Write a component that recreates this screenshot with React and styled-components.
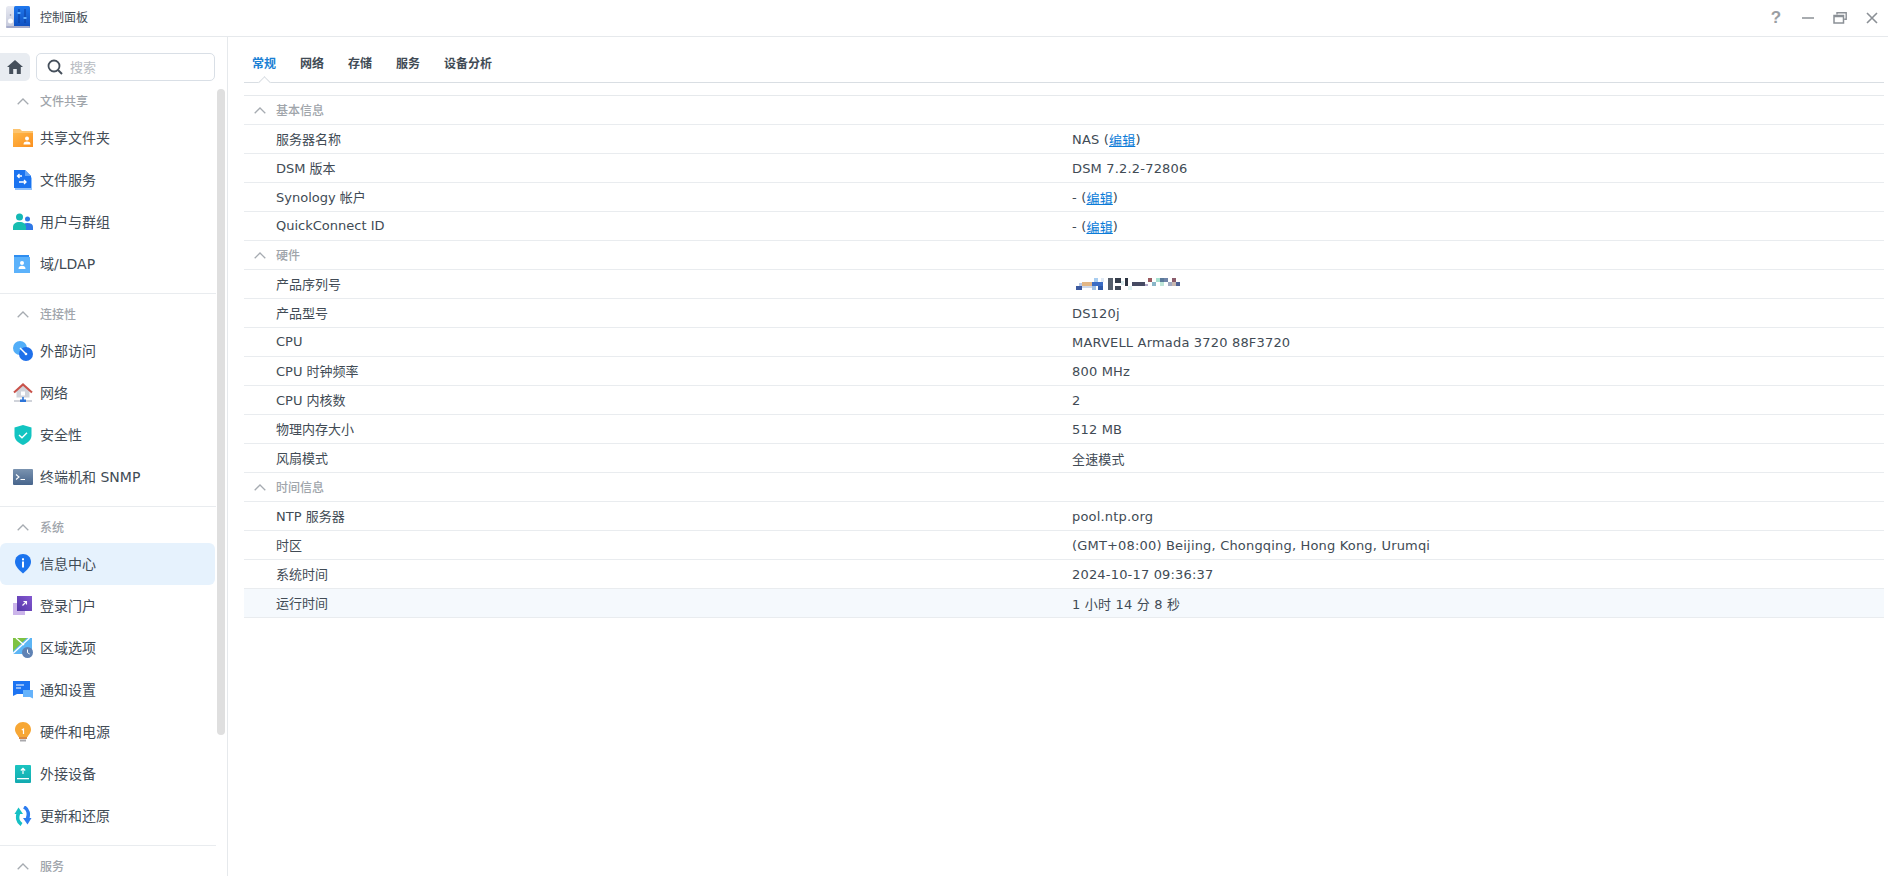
import styled, { createGlobalStyle } from 'styled-components'

const FONT = `"DejaVu Sans", "Noto Sans CJK SC", sans-serif`

const GlobalStyle = createGlobalStyle`
  html, body, #root {
    margin: 0;
    height: 100%;
  }

  body {
    background: #fff;
    overflow: hidden;
    font-family: ${FONT};
    color: #414b55;
  }
`

const FolderIcon = () => (
  <svg width="20" height="20" viewBox="0 0 20 20">
    <defs>
      <linearGradient id="fold" x1="0" y1="0" x2="1" y2="1">
        <stop offset="0" stopColor="#ffb84a" />
        <stop offset="1" stopColor="#fb8f1d" />
      </linearGradient>
    </defs>
    <path d="M0 1h7l2 2h11v16H0z" fill="#fdc46f" />
    <path d="M0 5h20v14H0z" fill="url(#fold)" />
    <circle cx="14" cy="10.5" r="2" fill="#fff" />
    <path d="M10.5 16.5c0-2.400 1.500-3 3.500-3s3.500.6 3.500 3z" fill="#fff" />
  </svg>
)

const FileServiceIcon = () => (
  <svg width="20" height="20" viewBox="0 0 20 20">
    <path d="M2 2h11l6 6v12H2z" fill="#8fc0fb" />
    <path d="M1 0h11l6 6v12H1z" fill="#1a73f0" />
    <path d="M12 0l6 6h-6z" fill="#63a4f7" />
    <path d="M9 6H5M6.500 4L4.500 6l2 2M6 12h6.500M11 10l2 2-2 2" fill="none" stroke="#fff" strokeWidth="1.300" />
  </svg>
)

const UsersIcon = () => (
  <svg width="20" height="20" viewBox="0 0 20 20">
    <circle cx="6.500" cy="5" r="3.500" fill="#14b8b4" />
    <circle cx="14.500" cy="7" r="2.500" fill="#2f78e6" />
    <path d="M9 18h11v-3c0-2.500-2-4-5.500-4S9 12.500 9 15z" fill="#2f78e6" />
    <path d="M0 18v-3c0-3 2.500-5 6.500-5s6.500 2 6.500 5v3z" fill="#17bdb0" />
  </svg>
)

const DomainIcon = () => (
  <svg width="20" height="20" viewBox="0 0 20 20">
    <path d="M1 1h15v18H1z" fill="#2e8df0" />
    <path d="M1 3h16v16H1z" fill="#5cb2fb" />
    <circle cx="9" cy="9" r="2" fill="#fff" />
    <path d="M5.500 15c0-2.500 1.500-3.200 3.500-3.200s3.500.7 3.500 3.200z" fill="#fff" />
  </svg>
)

const ExternalIcon = () => (
  <svg width="20" height="20" viewBox="0 0 20 20">
    <circle cx="7" cy="7" r="7" fill="#52aef8" />
    <circle cx="13" cy="13" r="7" fill="#1f70ea" />
    <path d="M7 7l6 6" stroke="#fff" strokeWidth="1.400" />
    <circle cx="13" cy="13" r="1.300" fill="#fff" />
  </svg>
)

const NetworkIcon = () => (
  <svg width="20" height="20" viewBox="0 0 20 20">
    <path d="M3.500 8L10 2.500 16.500 8v6.500h-13z" fill="#d0d3da" />
    <path d="M1 9.500L10 1.500l9 8" fill="none" stroke="#c9524a" strokeWidth="2.100" />
    <rect x="8" y="8.500" width="4" height="4" fill="#fff" />
    <rect x="1" y="17" width="18" height="2" fill="#d0d3da" />
    <rect x="9.200" y="14" width="1.600" height="3" fill="#2c74d8" />
    <rect x="7" y="16.500" width="6" height="2.500" fill="#2c74d8" />
  </svg>
)

const ShieldIcon = () => (
  <svg width="20" height="20" viewBox="0 0 20 20">
    <path d="M10 0l8.500 2.500v8c0 4.500-4 7.500-8.500 9.500-4.500-2-8.500-5-8.500-9.500v-8z" fill="#12c4c1" />
    <path d="M6 10l3 2.800 5-5" fill="none" stroke="#fff" strokeWidth="1.400" />
  </svg>
)

const TerminalIcon = () => (
  <svg width="20" height="20" viewBox="0 0 20 20">
    <defs>
      <linearGradient id="term" x1="0" y1="0" x2="0" y2="1">
        <stop offset="0" stopColor="#7a93b0" />
        <stop offset="1" stopColor="#47658c" />
      </linearGradient>
    </defs>
    <rect x="0" y="2" width="20" height="16" rx="1" fill="url(#term)" />
    <path d="M3 7.500l3 2.500-3 2.500M7.500 12.500H12" fill="none" stroke="#fff" strokeWidth="1.100" />
  </svg>
)

const InfoIcon = () => (
  <svg width="20" height="20" viewBox="0 0 20 20">
    <path d="M10 0c4.500 0 8 3.300 8 7.800 0 4.700-4.500 8.700-8 11.700-3.500-3-8-7-8-11.700C2 3.300 5.500 0 10 0z" fill="#1c74ee" />
    <rect x="9" y="7.500" width="2" height="6" fill="#fff" />
    <rect x="9" y="4.300" width="2" height="2" fill="#fff" />
  </svg>
)

const LoginIcon = () => (
  <svg width="20" height="20" viewBox="0 0 20 20">
    <defs>
      <linearGradient id="portal" x1="1" y1="0" x2="0" y2="1">
        <stop offset="0" stopColor="#8458d0" />
        <stop offset="1" stopColor="#5436a8" />
      </linearGradient>
    </defs>
    <rect x="0" y="7" width="12" height="12" fill="#cbb4ea" />
    <rect x="4" y="0" width="15" height="15" fill="url(#portal)" />
    <path d="M9.500 9.500l4-4M10.500 5.500h3v3" fill="none" stroke="#fff" strokeWidth="1.100" />
  </svg>
)

const RegionIcon = () => (
  <svg width="20" height="20" viewBox="0 0 20 20">
    <rect x="0" y="0" width="19" height="16" fill="#5cb5f5" />
    <path d="M0 0h14L0 13z" fill="#7ec242" />
    <path d="M0 15.500L16.500 0" stroke="#fff" strokeWidth="1.300" />
    <path d="M3 0l8 7" stroke="#fff" strokeWidth="1.300" />
    <circle cx="14.500" cy="14.500" r="5.500" fill="#5f82b4" />
    <path d="M14.500 11.500v3.200l2.200 1.300" fill="none" stroke="#fff" strokeWidth="1" />
  </svg>
)

const NoticeIcon = () => (
  <svg width="20" height="20" viewBox="0 0 20 20">
    <path d="M0 1h17v13H4l-4 2z" fill="#1d74f2" />
    <path d="M3 5h8M3 8h5" stroke="#fff" strokeWidth="1.200" />
    <path d="M10 10h10v8.500l-3-1.500h-7z" fill="#66b3fb" />
  </svg>
)

const BulbIcon = () => (
  <svg width="20" height="20" viewBox="0 0 20 20">
    <path d="M10 0c4.500 0 8 3.300 8 7.500 0 3.500-2.500 5.200-3.500 7.500h-9C4.500 12.700 2 11 2 7.500 2 3.300 5.500 0 10 0z" fill="#f7a735" />
    <rect x="6" y="15" width="8" height="2" fill="#d98a44" />
    <rect x="7" y="17.500" width="6" height="2" fill="#a9a9ad" />
    <path d="M8.800 8l1.700-1v5" fill="none" stroke="#fff" strokeWidth="1.200" />
  </svg>
)

const DeviceIcon = () => (
  <svg width="20" height="20" viewBox="0 0 20 20">
    <defs>
      <linearGradient id="dev" x1="0" y1="0" x2="0" y2="1">
        <stop offset="0" stopColor="#1bc4c0" />
        <stop offset="1" stopColor="#12aab0" />
      </linearGradient>
    </defs>
    <rect x="2" y="1" width="16" height="18" rx="1" fill="url(#dev)" />
    <path d="M10 10V4.500M7.800 6.500L10 4.300l2.200 2.200" fill="none" stroke="#fff" strokeWidth="1.200" />
    <rect x="4" y="14" width="12" height="1.300" fill="#fff" />
  </svg>
)

const UpdateIcon = () => (
  <svg width="20" height="20" viewBox="0 0 20 20">
    <path d="M8.500 18.500C4.500 16 4 11 5.500 7" fill="none" stroke="#16c0c4" strokeWidth="3.600" />
    <path d="M5.500 1.500L10 8H1.500z" fill="#16c0c4" />
    <path d="M11 1c4.500 2.500 5 7.500 3.500 11.500" fill="none" stroke="#2c7cf0" strokeWidth="3.600" />
    <path d="M14.500 18.500L10 12h8.500z" fill="#2c7cf0" />
  </svg>
)

const AppIcon = () => (
  <svg width="24" height="24" viewBox="0 0 24 24">
    <defs>
      <linearGradient id="app-right" x1="0" y1="0" x2="0" y2="1">
        <stop offset="0" stopColor="#1f78ee" />
        <stop offset="1" stopColor="#0e4dbd" />
      </linearGradient>
      <linearGradient id="app-left" x1="0" y1="0" x2="0" y2="1">
        <stop offset="0" stopColor="#e8eaf2" />
        <stop offset="1" stopColor="#c3c7da" />
      </linearGradient>
    </defs>
    <rect x="0" y="0" width="12" height="22" rx="2.500" fill="url(#app-left)" />
    <rect x="8" y="0" width="16" height="22" rx="1.500" fill="url(#app-right)" />
    <rect x="0" y="20" width="24" height="2" rx="1" fill="#a6acca" />
    <circle cx="4.500" cy="15" r="2.500" fill="#fff" />
    <circle cx="4.500" cy="9" r="0.800" fill="#8d92a8" />
    <path d="M13 3v14M19 3v14" stroke="#0b3d9c" strokeWidth="1" />
    <rect x="11.500" y="6" width="3" height="2" fill="#5fb0ff" />
    <rect x="17.500" y="11" width="3" height="2" fill="#5fb0ff" />
  </svg>
)

const HomeIcon = () => (
  <svg width="16" height="14" viewBox="0 0 16 14">
    <path d="M8 0L0 7h2.200v7h4V9h3.600v5h4V7H16z" fill="#454f5b" />
  </svg>
)

const SearchIcon = () => (
  <svg width="16" height="16" viewBox="0 0 16 16">
    <circle cx="7" cy="7" r="5.500" fill="none" stroke="#454f5b" strokeWidth="1.800" />
    <path d="M11 11l4 4" stroke="#454f5b" strokeWidth="2" />
  </svg>
)

const Chevron = () => (
  <svg width="12" height="7" viewBox="0 0 12 7">
    <path d="M.7 6.300L6 1l5.300 5.300" fill="none" stroke="#a6abb1" strokeWidth="1.300" />
  </svg>
)

const HelpIcon = () => <WindowGlyph>?</WindowGlyph>

const MinimizeIcon = () => (
  <svg width="12" height="12" viewBox="0 0 12 12">
    <path d="M0 6h12" stroke="#8b9096" strokeWidth="1.500" />
  </svg>
)

const RestoreIcon = () => (
  <svg width="14" height="12" viewBox="0 0 14 12">
    <path d="M4 2.500V.8h9.200v6.500h-2" fill="none" stroke="#8b9096" strokeWidth="1.400" />
    <rect x="1" y="3.500" width="9.500" height="7.500" fill="none" stroke="#8b9096" strokeWidth="1.500" />
    <path d="M1 4.500h9.500" stroke="#8b9096" strokeWidth="1.500" />
  </svg>
)

const CloseIcon = () => (
  <svg width="12" height="12" viewBox="0 0 12 12">
    <path d="M1 1l10 10M11 1L1 11" stroke="#8b9096" strokeWidth="1.600" />
  </svg>
)

// mosaic over the serial number, cells read off the screenshot
const MOSAIC = [
  [0, 8, 6, 4, '#3d5aa0'], [3, 5, 4, 3, '#b9c8e6'], [6, 4, 10, 4, '#e3b684'], [6, 8, 10, 2, '#cfd8e8'],
  [16, 4, 11, 4, '#3a6cc4'], [18, 0, 4, 4, '#a9cdf0'], [16, 8, 4, 4, '#9fc0e4'], [22, 8, 5, 4, '#2f5aa8'],
  [25, 0, 3, 4, '#dfe9f5'], [32, 0, 5, 12, '#565f6c'], [39, 0, 6, 5, '#343d4b'], [39, 8, 6, 4, '#3e4756'],
  [45, 3, 3, 4, '#d8ecee'], [49, 0, 3, 8, '#2b3442'], [52, 8, 4, 4, '#dff2f2'], [56, 4, 13, 4, '#464a62'],
  [69, 6, 3, 2, '#b0a8c8'],
]
const MOSAIC_DOTS = [
  [72, 0, '#9a5a60'], [76, 4, '#8ab6c8'], [80, 0, '#a8e0d0'], [84, 4, '#bfe6d8'], [88, 0, '#6f84a8'],
  [92, 4, '#a0a8c0'], [96, 0, '#8a5c6c'], [100, 4, '#4f6294'], [96, 4, '#c8b8b0'], [84, 0, '#5a7a9a'],
]

const SerialMosaic = () => (
  <MosaicWrap>
    <svg width="104" height="12" viewBox="0 0 104 12">
      {MOSAIC.map(([x, y, w, h, fill], i) => (
        <rect key={i} x={x} y={y} width={w} height={h} fill={fill} />
      ))}
      {MOSAIC_DOTS.map(([x, y, fill], i) => (
        <rect key={i} x={x} y={y} width="4" height="4" fill={fill} />
      ))}
    </svg>
  </MosaicWrap>
)

const NAV = [
  {
    title: '文件共享',
    items: [
      { label: '共享文件夹', Icon: FolderIcon },
      { label: '文件服务', Icon: FileServiceIcon },
      { label: '用户与群组', Icon: UsersIcon },
      { label: '域/LDAP', Icon: DomainIcon },
    ],
  },
  {
    title: '连接性',
    items: [
      { label: '外部访问', Icon: ExternalIcon },
      { label: '网络', Icon: NetworkIcon },
      { label: '安全性', Icon: ShieldIcon },
      { label: '终端机和 SNMP', Icon: TerminalIcon },
    ],
  },
  {
    title: '系统',
    items: [
      { label: '信息中心', Icon: InfoIcon, active: true },
      { label: '登录门户', Icon: LoginIcon },
      { label: '区域选项', Icon: RegionIcon },
      { label: '通知设置', Icon: NoticeIcon },
      { label: '硬件和电源', Icon: BulbIcon },
      { label: '外接设备', Icon: DeviceIcon },
      { label: '更新和还原', Icon: UpdateIcon },
    ],
  },
  { title: '服务', items: [] },
]

const TABS = ['常规', '网络', '存储', '服务', '设备分析']

const Edit = ({ prefix }) => (
  <>
    {prefix} (<EditLink href="#">编辑</EditLink>)
  </>
)

const GROUPS = [
  {
    title: '基本信息',
    rows: [
      ['服务器名称', <Edit prefix="NAS" />],
      ['DSM 版本', 'DSM 7.2.2-72806'],
      ['Synology 帐户', <Edit prefix="-" />],
      ['QuickConnect ID', <Edit prefix="-" />],
    ],
  },
  {
    title: '硬件',
    rows: [
      ['产品序列号', <SerialMosaic />],
      ['产品型号', 'DS120j'],
      ['CPU', 'MARVELL Armada 3720 88F3720'],
      ['CPU 时钟频率', '800 MHz'],
      ['CPU 内核数', '2'],
      ['物理内存大小', '512 MB'],
      ['风扇模式', '全速模式'],
    ],
  },
  {
    title: '时间信息',
    rows: [
      ['NTP 服务器', 'pool.ntp.org'],
      ['时区', '(GMT+08:00) Beijing, Chongqing, Hong Kong, Urumqi'],
      ['系统时间', '2024-10-17 09:36:37'],
      ['运行时间', '1 小时 14 分 8 秒', true],
    ],
  },
]

export default function App() {
  return (
    <>
      <GlobalStyle />
      <Window>
        <TitleBar>
          <AppBadge>
            <AppIcon />
          </AppBadge>
          <Title>控制面板</Title>
          <WindowButtons>
            <WindowButton><HelpIcon /></WindowButton>
            <WindowButton><MinimizeIcon /></WindowButton>
            <WindowButton><RestoreIcon /></WindowButton>
            <WindowButton><CloseIcon /></WindowButton>
          </WindowButtons>
        </TitleBar>
        <Body>
          <Sidebar>
            <SearchRow>
              <HomeButton><HomeIcon /></HomeButton>
              <SearchBox>
                <SearchIcon />
                <Placeholder>搜索</Placeholder>
              </SearchBox>
            </SearchRow>
            {NAV.map((section, i) => (
              <NavSection key={section.title} $last={i === NAV.length - 1}>
                <NavHeading>
                  <Chevron />
                  <HeadingText>{section.title}</HeadingText>
                </NavHeading>
                {section.items.map(({ label, Icon, active }) => (
                  <NavItem key={label} $active={active}>
                    <Icon />
                    <NavLabel>{label}</NavLabel>
                  </NavItem>
                ))}
              </NavSection>
            ))}
            <ScrollThumb />
          </Sidebar>
          <Main>
            <TabBar>
              {TABS.map((tab, i) => (
                <Tab key={tab} $active={i === 0}>{tab}</Tab>
              ))}
            </TabBar>
            <Table>
              {GROUPS.map((group) => (
                <div key={group.title}>
                  <GroupRow>
                    <Chevron />
                    <HeadingText>{group.title}</HeadingText>
                  </GroupRow>
                  {group.rows.map(([label, value, hover]) => (
                    <Row key={label} $hover={hover}>
                      <RowLabel>{label}</RowLabel>
                      <Value>{value}</Value>
                    </Row>
                  ))}
                </div>
              ))}
            </Table>
          </Main>
        </Body>
      </Window>
    </>
  )
}

const Window = styled.div`
  height: 876px;
  display: flex;
  flex-direction: column;
  overflow: hidden;
`

const TitleBar = styled.header`
  height: 36px;
  flex: none;
  box-sizing: content-box;
  border-bottom: 1px solid #e6e9ec;
  display: flex;
  align-items: center;
  padding-left: 6px;
`

const AppBadge = styled.div`
  width: 24px;
  height: 24px;
  display: flex;
`

const Title = styled.h1`
  margin: 0 0 0 10px;
  padding-bottom: 4px;
  font-size: 12px;
  font-weight: 400;
  color: #414b55;
`

const WindowButtons = styled.div`
  margin-left: auto;
  display: flex;
`

const WindowButton = styled.div`
  width: 32px;
  height: 36px;
  display: flex;
  align-items: center;
  justify-content: center;
`

const WindowGlyph = styled.span`
  font-family: "Liberation Sans", sans-serif;
  font-size: 17px;
  font-weight: 700;
  color: #9a9ea3;
`

const Body = styled.div`
  flex: 1;
  min-height: 0;
  display: flex;
`

const Sidebar = styled.nav`
  position: relative;
  width: 227px;
  flex: none;
  border-right: 1px solid #e6e9ec;
  overflow: hidden;
`

const ScrollThumb = styled.div`
  position: absolute;
  left: 217px;
  top: 52px;
  width: 8px;
  height: 646px;
  border-radius: 4px;
  background: #dfdfdf;
`

const SearchRow = styled.div`
  width: 215px;
  height: 28px;
  padding-top: 16px;
  display: flex;
  gap: 6px;
`

const HomeButton = styled.div`
  width: 30px;
  height: 28px;
  border-radius: 0 5px 5px 0;
  background: #e8ecf1;
  display: flex;
  align-items: center;
  justify-content: center;
`

const SearchBox = styled.div`
  flex: 1;
  box-sizing: border-box;
  border: 1px solid #d9dfe6;
  border-radius: 5px;
  display: flex;
  align-items: center;
  gap: 7px;
  padding-left: 10px;
`

const Placeholder = styled.span`
  padding-bottom: 2px;
  font-size: 13px;
  color: #b7bcc2;
`

const NavSection = styled.section`
  width: 216px;
  padding-top: 4px;
  padding-bottom: 8px;
  border-bottom: ${(p) => (p.$last ? 'none' : '1px solid #e9ecef')};
`

const NavHeading = styled.div`
  height: 32px;
  display: flex;
  align-items: center;
  gap: 11px;
  padding-left: 17px;
  font-size: 12px;
  font-weight: 500;
  color: #a0a5ab;
`

const HeadingText = styled.span`
  padding-bottom: 2px;
`

const NavItem = styled.div`
  width: 215px;
  height: 42px;
  box-sizing: border-box;
  display: flex;
  align-items: center;
  gap: 7px;
  padding-left: 13px;
  border-radius: 6px;
  font-size: 14px;
  color: #414b55;
  background: ${(p) => (p.$active ? '#e6f2fd' : 'transparent')};
`

const NavLabel = styled.span`
  padding-bottom: 2px;
`

const Main = styled.main`
  flex: 1;
  min-width: 0;
  padding: 0 4px 0 16px;
`

const TabBar = styled.div`
  height: 45px;
  box-sizing: content-box;
  border-bottom: 1px solid #d9dee3;
  display: flex;
  gap: 24px;
  padding-left: 8px;
  margin-bottom: 12px;
`

const Tab = styled.div`
  position: relative;
  height: 45px;
  line-height: 55px;
  font-size: 12px;
  font-weight: 700;
  color: ${(p) => (p.$active ? '#1a7fd4' : '#414b55')};

  &::after {
    content: '';
    display: ${(p) => (p.$active ? 'block' : 'none')};
    position: absolute;
    left: 8px;
    bottom: -5px;
    width: 8px;
    height: 8px;
    background: #fff;
    border-left: 1px solid #d9dee3;
    border-top: 1px solid #d9dee3;
    transform: rotate(45deg);
  }
`

const Table = styled.div`
  border-top: 1px solid #e6e9ec;
`

const GroupRow = styled.div`
  height: 29px;
  box-sizing: border-box;
  border-bottom: 1px solid #e9ecef;
  display: flex;
  align-items: center;
  gap: 10px;
  padding-left: 10px;
  font-size: 12px;
  font-weight: 500;
  color: #a0a5ab;
`

const Row = styled.div`
  height: 29px;
  box-sizing: border-box;
  border-bottom: 1px solid #e9ecef;
  display: grid;
  grid-template-columns: 796px 1fr;
  align-items: center;
  padding-left: 32px;
  font-size: 13px;
  color: #414b55;
  background: ${(p) => (p.$hover ? '#f5f9fd' : 'transparent')};
`

const RowLabel = styled.span`
  padding-bottom: 2px;
`

const Value = styled.span`
  display: flex;
  align-items: center;
  white-space: pre-wrap;
  min-width: 0;
  letter-spacing: 0.18px;
`

const MosaicWrap = styled.span`
  display: flex;
  padding-left: 4px;
`

const EditLink = styled.a`
  color: #0a7bd8;
  text-decoration: underline;
`
